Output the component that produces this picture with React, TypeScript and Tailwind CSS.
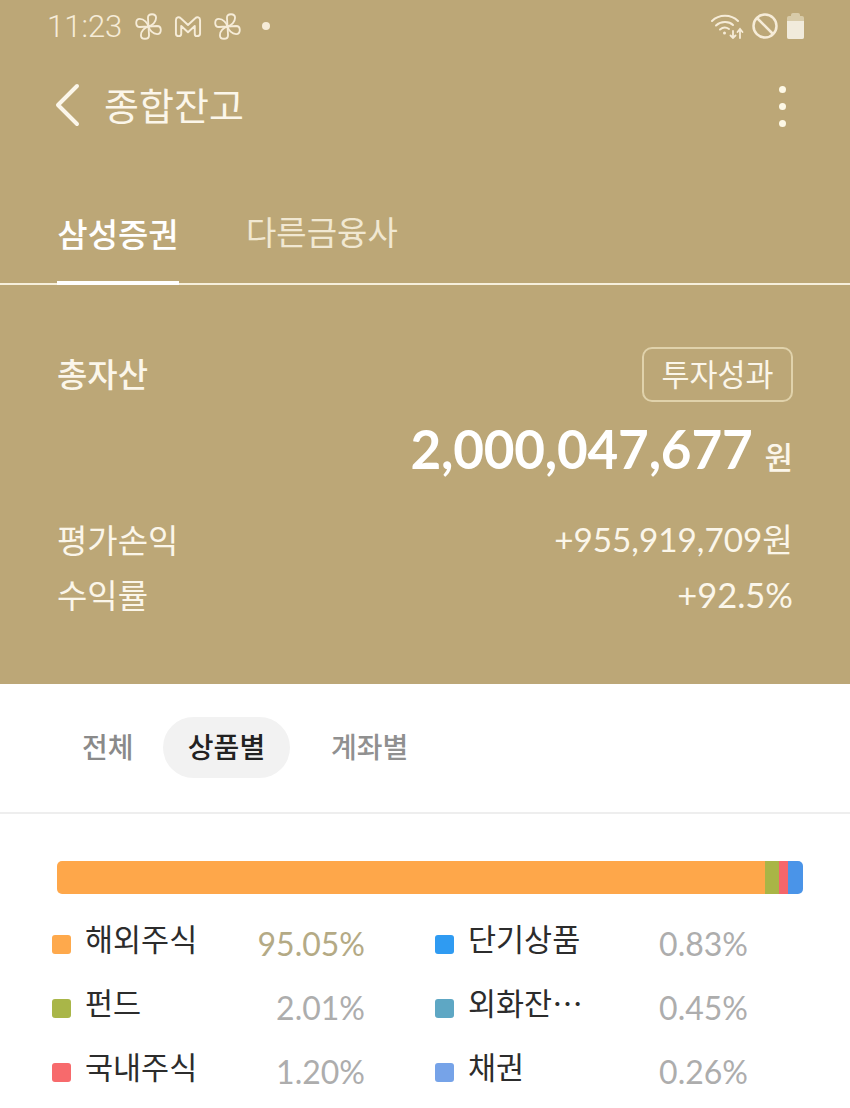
const font = "font-['Lato','Noto_Sans_CJK_KR',sans-serif]"

// one blade, repeated at 90 degree steps
const blade = 'M14 14L13.500 6C13.500 1.500 21 1.500 21 6C21 10 17.500 13 14 14Z'

function Pinwheel() {
  return (
    <svg width="27" height="27" viewBox="1.500 1.500 25 25" fill="none" stroke="#f6ecd8" strokeWidth="1.700" strokeLinejoin="round">
      <path d={blade} />
      <path d={blade} transform="rotate(90 14 14)" />
      <path d={blade} transform="rotate(180 14 14)" />
      <path d={blade} transform="rotate(270 14 14)" />
    </svg>
  )
}

function StatusBar() {
  return (
    <div className="flex h-[52px] items-center justify-between pl-[47px] pr-[46px]">
      <div className="flex items-center">
        <span className="font-['Roboto',sans-serif] text-[31px] font-light leading-none text-[#f6ecd8]">11:23</span>
        <div className="ml-[13px] flex items-center gap-[12px]">
          <Pinwheel />
          <svg width="28" height="24" viewBox="0 0 29 24" fill="none" stroke="#f6ecd8" strokeWidth="2" strokeLinejoin="round">
            <path d="M2 20V6C2 3 5 2 7 4L14.500 11L22 4C24 2 27 3 27 6V20C27 22 25 22.500 23.500 22.500C22 22.500 21.500 21 21.500 20V12L14.500 18.500L7.500 12V20C7.500 21.500 6.500 22.500 5 22.500C3.500 22.500 2 22 2 20Z" />
          </svg>
          <Pinwheel />
          <div className="ml-[9px] h-[8px] w-[8px] rounded-full bg-[#f6ecd8]" />
        </div>
      </div>
      <div className="flex items-center gap-[7px]">
        <svg width="34" height="26" viewBox="0 0 34 26" fill="none" stroke="#f6ecd8" strokeWidth="2" strokeLinecap="round">
          <path d="M1 8C8 1 20 1 27 8" />
          <path d="M5 12.500C10 8 18 8 22 12" />
          <path d="M9 16.500C12 14 15 14 18 16" />
          <circle cx="13.500" cy="20" r="1.500" fill="#f6ecd8" stroke="none" />
          <path d="M22 18V25M19.500 22.500L22 25L24.500 22.500" strokeWidth="1.800" />
          <path d="M29 25V16M26.500 19L29 16L31.500 19" strokeWidth="1.800" />
        </svg>
        <svg width="26" height="26" viewBox="0 0 26 26" fill="none" stroke="#f6ecd8" strokeWidth="2.500">
          <circle cx="13" cy="13" r="11.500" />
          <path d="M5 5L21 21" />
        </svg>
        <div className="ml-[2px] flex flex-col items-center">
          <div className="h-[3px] w-[9px] rounded-t-[2px] bg-[#d8cba9]" />
          <div className="h-[23px] w-[17px] rounded-[2px] bg-[#d8cba9] pt-[5px]">
            <div className="h-[18px] w-full rounded-b-[2px] bg-[#f1ebdc]" />
          </div>
        </div>
      </div>
    </div>
  )
}

function LegendItem({ color, label, value, valueColor }: { color: string; label: string; value: string; valueColor: string }) {
  return (
    <div className="flex h-[64px] items-center">
      <div className={`h-[19px] w-[19px] rounded-[3px] ${color}`} />
      <span className="ml-[14px] mb-[9px] text-[30.500px] leading-[1.3] text-[#2c2c2c]">{label}</span>
      <span className={`ml-auto text-[32px] leading-none ${valueColor}`}>{value}</span>
    </div>
  )
}

export default function App() {
  return (
    <div className={`h-[1108px] w-[850px] overflow-hidden bg-white ${font}`}>
      <div className="h-[684px] bg-[#bca777] text-[#fbf6ea]">
        <StatusBar />

        <div className="flex h-[106px] items-center justify-between pb-[1px] pl-[54px] pr-[64px]">
          <div className="flex items-center">
            <svg width="26" height="44" viewBox="0 0 26 44" fill="none" stroke="#fbf6ea" strokeWidth="4" strokeLinecap="round" strokeLinejoin="round">
              <path d="M23 3L4 22L23 41" />
            </svg>
            <h1 className="ml-[24px] text-[38px] leading-none font-normal">종합잔고</h1>
          </div>
          <div className="mt-[4px] flex flex-col gap-[10px]">
            <div className="h-[7px] w-[7px] rounded-full bg-[#fdf8e6]" />
            <div className="h-[7px] w-[7px] rounded-full bg-[#fdf8e6]" />
            <div className="h-[7px] w-[7px] rounded-full bg-[#fdf8e6]" />
          </div>
        </div>

        <div className="flex h-[127px] items-end border-b-2 border-[#f6efdc] px-[57px]">
          <div className="mb-[-2px] flex h-[75px] w-[122px] items-start justify-center border-b-4 border-white pt-[8px] text-[33px] leading-none font-medium whitespace-nowrap text-white">삼성증권</div>
          <div className="ml-[67px] flex h-[75px] items-start pt-[8px] text-[33px] leading-none text-[#f1e8d2]">다른금융사</div>
        </div>

        <div className="px-[57px] pt-[62px]">
          <div className="flex items-center justify-between">
            <span className="text-[33px] leading-none font-medium">총자산</span>
            <button className="flex h-[55px] w-[151px] items-center justify-center rounded-[10px] border-2 border-[#e0d2ab] text-[30.500px] leading-none">투자성과</button>
          </div>
          <div className="mt-[20px] flex items-baseline justify-end">
            <span className="text-[53px] leading-none font-bold tracking-[-0.2px] text-white">2,000,047,677</span>
            <span className="ml-[12px] text-[31px] leading-none font-medium">원</span>
          </div>
          <div className="mt-[37px] flex h-[56px] items-center justify-between text-[33px] leading-none">
            <span>평가손익</span>
            <span className="text-[33.300px]">+955,919,709원</span>
          </div>
          <div className="flex h-[54px] items-center justify-between text-[33px] leading-none">
            <span>수익률</span>
            <span className="text-[34.500px]">+92.5%</span>
          </div>
        </div>
      </div>

      <div className="flex h-[130px] items-center border-b-2 border-[#eeeeee] pb-[2px] pl-[57px] text-[28px] leading-none">
        <div className="flex h-[61px] w-[106px] items-center justify-start pl-[25px] font-medium text-[#8a8a8a] whitespace-nowrap">전체</div>
        <div className="flex h-[61px] w-[127px] items-center justify-center rounded-full bg-[#f2f2f2] font-medium text-[#222222]">상품별</div>
        <div className="ml-[41px] flex h-[61px] items-center font-medium text-[#909090]">계좌별</div>
      </div>

      <div className="pl-[52px] pr-[47px] pt-[47px]">
        <div className="ml-[5px] flex h-[33px] overflow-hidden rounded-[5px]">
          <div className="w-[708px] bg-[#fea74a]" />
          <div className="w-[14px] bg-[#a9b546]" />
          <div className="w-[9px] bg-[#f5666a]" />
          <div className="w-[15px] bg-[#4a94e8]" />
        </div>
        <div className="mt-[18px] grid grid-cols-[313px_313px] gap-x-[70px]">
          <div>
            <LegendItem color="bg-[#fea94c]" label="해외주식" value="95.05%" valueColor="text-[#b4aa85]" />
            <LegendItem color="bg-[#a9b648]" label="펀드" value="2.01%" valueColor="text-[#adadad]" />
            <LegendItem color="bg-[#f76a6c]" label="국내주식" value="1.20%" valueColor="text-[#adadad]" />
          </div>
          <div>
            <LegendItem color="bg-[#2f9bf2]" label="단기상품" value="0.83%" valueColor="text-[#adadad]" />
            <LegendItem color="bg-[#5ea7c4]" label="외화잔⋯" value="0.45%" valueColor="text-[#adadad]" />
            <LegendItem color="bg-[#76a3e8]" label="채권" value="0.26%" valueColor="text-[#adadad]" />
          </div>
        </div>
      </div>
    </div>
  )
}
